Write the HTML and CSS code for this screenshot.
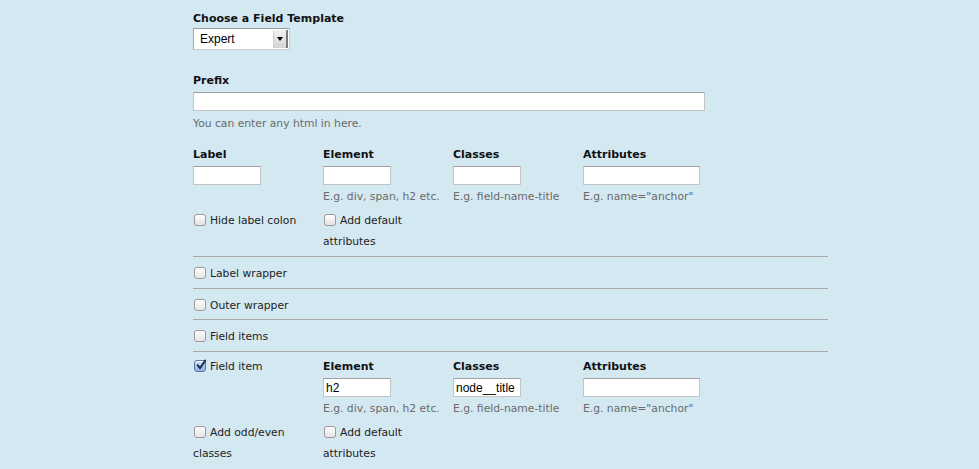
FILE: index.html
```html
<!DOCTYPE html>
<html>
<head>
<meta charset="utf-8">
<link rel="stylesheet" href="styles.css">
</head>
<body>
<div class="form">
  <div class="item">
    <div class="head">Choose a Field Template</div>
    <div class="select"><span class="select-value">Expert</span><span class="select-btn"><span class="tri"></span></span></div>
  </div>

  <div class="item prefix">
    <div class="head">Prefix</div>
    <div class="text long"></div>
    <div class="desc">You can enter any html in here.</div>
  </div>

  <div class="cols first">
    <div class="col">
      <div class="head">Label</div>
      <div class="text short"></div>
    </div>
    <div class="col">
      <div class="head">Element</div>
      <div class="text short"></div>
      <div class="desc">E.g. div, span, h2 etc.</div>
    </div>
    <div class="col">
      <div class="head">Classes</div>
      <div class="text short"></div>
      <div class="desc">E.g. field-name-title</div>
    </div>
    <div class="col">
      <div class="head">Attributes</div>
      <div class="text wide"></div>
      <div class="desc">E.g. name="anchor"</div>
    </div>
    <div class="check"><span class="cb"></span><span class="cb-label">Hide label colon</span></div>
    <div class="check"><span class="cb"></span><span class="cb-label">Add default attributes</span></div>
  </div>

  <div class="row"><div class="check single"><span class="cb"></span><span class="cb-label">Label wrapper</span></div></div>
  <div class="row tight"><div class="check single"><span class="cb"></span><span class="cb-label">Outer wrapper</span></div></div>
  <div class="row"><div class="check single"><span class="cb"></span><span class="cb-label">Field items</span></div></div>

  <div class="row">
    <div class="cols">
      <div class="col">
        <div class="check head-check"><span class="cb checked"><svg viewBox="0 0 12 12" width="12" height="12"><path d="M2.6 6.2 L5 9.2 L10.2 1.6" fill="none" stroke="#1b2a4a" stroke-width="2" stroke-linecap="round" stroke-linejoin="round"/></svg></span><span class="cb-label">Field item</span></div>
      </div>
      <div class="col">
        <div class="head">Element</div>
        <div class="text short"><span class="value">h2</span></div>
        <div class="desc">E.g. div, span, h2 etc.</div>
      </div>
      <div class="col">
        <div class="head">Classes</div>
        <div class="text short"><span class="value">node__title</span></div>
        <div class="desc">E.g. field-name-title</div>
      </div>
      <div class="col">
        <div class="head">Attributes</div>
        <div class="text wide"></div>
        <div class="desc">E.g. name="anchor"</div>
      </div>
      <div class="check"><span class="cb"></span><span class="cb-label">Add odd/even classes</span></div>
      <div class="check"><span class="cb"></span><span class="cb-label">Add default attributes</span></div>
    </div>
  </div>
</div>
</body>
</html>
```

FILE: styles.css
```css
html, body {
  margin: 0;
  padding: 0;
  background: #d4e8f2;
}
body {
  font-family: "DejaVu Sans", "Liberation Sans", sans-serif;
  font-size: 10.75px;
  color: #222;
}
.form {
  width: 635px;
  margin-left: 193px;
  padding-top: 10px;
}
.head {
  font-weight: bold;
  font-size: 11px;
  line-height: 18px;
  color: #111;
}
.select {
  margin-top: 0;
  width: 95px;
  height: 20px;
  background: #fff;
  border: 1px solid #c8c8c8;
  border-top-color: #9a9a9a;
  border-left-color: #a8a8a8;
  display: flex;
  align-items: stretch;
  justify-content: space-between;
}
.select-value {
  font-family: "Liberation Sans", Arial, sans-serif;
  font-size: 12px;
  line-height: 20px;
  padding-left: 6px;
  color: #000;
}
.select-btn {
  width: 12px;
  margin: 1px 1px 1px 0;
  background: linear-gradient(#f2f2f2, #d4d4d4);
  border-left: 1px solid #d0d0d0;
  border-right: 2px solid #7a7a7a;
  display: flex;
  align-items: center;
  justify-content: center;
}
.tri {
  width: 0;
  height: 0;
  border-left: 3px solid transparent;
  border-right: 3px solid transparent;
  border-top: 4px solid #000;
}
.prefix {
  margin-top: 22px;
}
.text {
  margin-top: 2px;
  height: 17px;
  background: #fff;
  border: 1px solid #c4c4c4;
  border-top-color: #a0a0a0;
  box-sizing: content-box;
  display: flex;
  align-items: center;
}
.text.long { width: 510px; }
.text.short { width: 66px; }
.text.wide { width: 115px; }
.value {
  font-family: "Liberation Sans", Arial, sans-serif;
  font-size: 12px;
  color: #000;
  padding-left: 2px;
}
.desc {
  margin-top: 3px;
  line-height: 18px;
  color: #6a6a6a;
}
.prefix .desc { margin-top: 4px; }
.cols {
  display: grid;
  grid-template-columns: 130px 130px 130px 130px;
}
.cols.first {
  margin-top: 13px;
  padding-bottom: 4px;
}
.cols .check {
  margin-top: 4px;
  line-height: 21px;
  width: 122px;
}
.check {
  display: block;
  color: #222;
}
.cb {
  display: inline-block;
  vertical-align: -2px;
  width: 10px;
  height: 10px;
  margin: 0 4px 0 1px;
  border: 1px solid #9a9a9a;
  border-radius: 3px;
  background: linear-gradient(#ffffff, #e4e4e4);
  box-shadow: inset 0 1px 0 #fff;
  position: relative;
}
.cb.checked {
  background: linear-gradient(#cfe0f5, #8db3e2);
  border-color: #5a76a0;
}
.cb.checked svg {
  position: absolute;
  left: 0;
  top: -2px;
}
.row {
  border-top: 1px solid #a9a9a9;
  padding: 6px 0 4px;
}
.row.tight {
  padding-bottom: 3px;
}
.row .check.single {
  line-height: 21px;
}
.row .cols .check.head-check {
  margin-top: 0;
  line-height: 18px;
}
.row:last-child {
  padding-top: 6px;
  padding-bottom: 10px;
}
```
